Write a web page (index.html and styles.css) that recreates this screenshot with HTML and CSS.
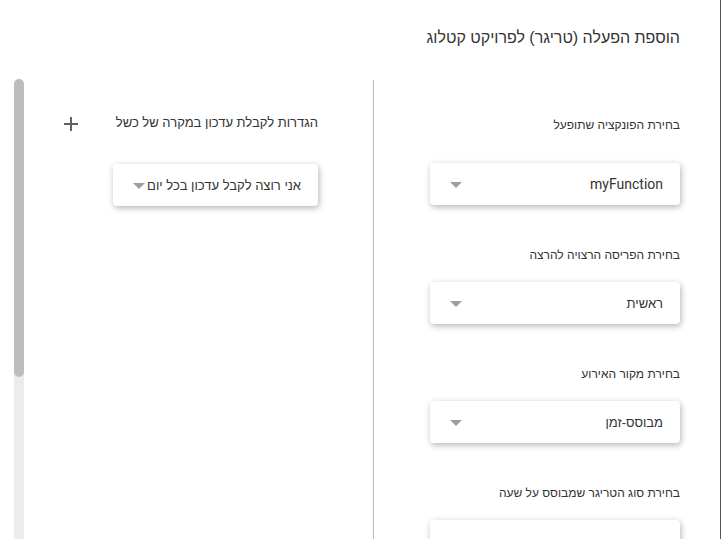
FILE: index.html
```html
<!DOCTYPE html>
<html lang="he" dir="rtl">
<head>
<meta charset="utf-8">
<title>הוספת הפעלה</title>
<link rel="stylesheet" href="styles.css">
</head>
<body>
<div class="page">
  <header class="header">
    <h1 class="title">הוספת הפעלה (טריגר) לפרויקט קטלוג</h1>
  </header>
  <div class="main">
    <section class="pane-right">
      <div class="field field-first">
        <div class="label">בחירת הפונקציה שתופעל</div>
        <div class="select select-wide"><span class="value">myFunction</span><span class="arrow"></span></div>
      </div>
      <div class="field">
        <div class="label">בחירת הפריסה הרצויה להרצה</div>
        <div class="select select-wide"><span class="value value-he">ראשית</span><span class="arrow"></span></div>
      </div>
      <div class="field">
        <div class="label">בחירת מקור האירוע</div>
        <div class="select select-wide"><span class="value value-he">מבוסס-זמן</span><span class="arrow"></span></div>
      </div>
      <div class="field">
        <div class="label">בחירת סוג הטריגר שמבוסס על שעה</div>
        <div class="select select-wide"><span class="value"></span><span class="arrow"></span></div>
      </div>
    </section>
    <section class="pane-left">
      <div class="pane-left-content">
        <div class="left-head">
          <div class="label label-left">הגדרות לקבלת עדכון במקרה של כשל</div>
          <button class="add-btn" aria-label="הוספה">
            <svg width="16" height="16" viewBox="0 0 16 16"><path d="M8 1v14M1 8h14" stroke="#5f6368" stroke-width="2" fill="none"/></svg>
          </button>
        </div>
        <div class="select select-narrow"><span class="value value-he">אני רוצה לקבל עדכון בכל יום</span><span class="arrow"></span></div>
      </div>
      <div class="scrollbar"><div class="thumb"></div></div>
    </section>
  </div>
</div>
</body>
</html>
```

FILE: styles.css
```css
html, body {
  margin: 0;
  padding: 0;
  height: 100%;
  overflow: hidden;
  background: #ffffff;
}

body {
  font-family: Roboto, "Liberation Sans", Arial, sans-serif;
  color: #333333;
}

.page {
  width: 720px;
  height: 100vh;
  border-right: 1px solid #555555;
  display: flex;
  flex-direction: column;
  overflow: hidden;
}

.header {
  height: 80px;
  box-sizing: border-box;
  padding: 28px 40px 0 0;
  flex: none;
}

.title {
  margin: 0;
  font-size: 16px;
  line-height: 20px;
  font-weight: normal;
  color: #333333;
  font-family: "Liberation Sans", Arial, sans-serif;
}

.main {
  flex: 1;
  display: flex;
  min-height: 0;
}

.pane-right {
  width: 347px;
  flex: none;
  border-left: 1px solid #bdbdbd;
  box-sizing: border-box;
  padding: 37px 40px 0 0;
}

.field {
  margin-bottom: 42px;
}

.label {
  font-family: "Liberation Sans", Arial, sans-serif;
  font-size: 12px;
  line-height: 16px;
  color: #333333;
  margin-bottom: 19px;
}

.label-left {
  font-size: 13px;
}

.field-first .label {
  margin-bottom: 30px;
}

.select {
  height: 42px;
  box-sizing: border-box;
  background: #ffffff;
  border-radius: 4px;
  box-shadow: 1px 2px 6px rgba(0, 0, 0, 0.3);
  display: flex;
  align-items: center;
  justify-content: space-between;
  padding: 0 17px 0 20px;
}

.select-wide {
  width: 250px;
}

.select-narrow {
  width: 205px;
}

.value {
  font-size: 14px;
  color: #333333;
  white-space: nowrap;
}

.value-he {
  font-size: 13px;
  font-family: "Liberation Sans", Arial, sans-serif;
}

.arrow {
  width: 0;
  height: 0;
  border-left: 6px solid transparent;
  border-right: 6px solid transparent;
  border-top: 6px solid #9e9e9e;
  margin-top: 1px;
}

.pane-left {
  flex: 1;
  display: flex;
  min-width: 0;
}

.pane-left-content {
  flex: 1;
  padding: 35px 55px 0 35px;
}

.left-head {
  display: flex;
  justify-content: space-between;
  align-items: center;
  margin-bottom: 33px;
  height: 16px;
}

.left-head .label {
  margin-bottom: 0;
}

.add-btn {
  width: 24px;
  height: 24px;
  border: none;
  background: none;
  padding: 0;
  display: flex;
  align-items: center;
  justify-content: center;
  margin-top: 2px;
}

.scrollbar {
  width: 10px;
  flex: none;
  margin-left: 14px;
  margin-top: -1px;
  background: #ececec;
  border-radius: 5px 5px 0 0;
}

.thumb {
  height: 298px;
  background: #bdbdbd;
  border-radius: 5px;
}
```
